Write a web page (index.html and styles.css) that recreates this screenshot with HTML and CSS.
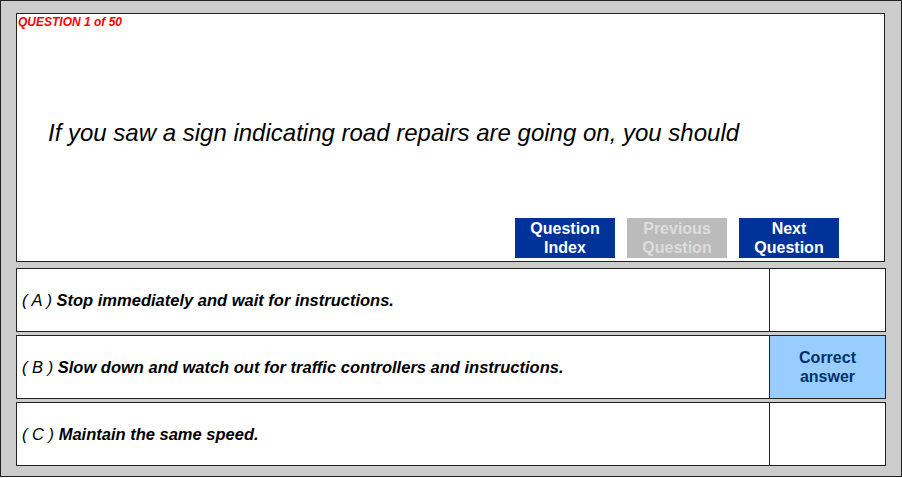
FILE: index.html
```html
<!DOCTYPE html>
<html lang="en">
<head>
  <meta charset="UTF-8" />
  <title>Question 1 of 50</title>
  <link rel="stylesheet" href="styles.css">
</head>
<body>
  <div class="frame">
    <div class="question">
      <div class="counter">QUESTION 1 of 50</div>
      <div class="qtext">If you saw a sign indicating road repairs are going on, you should</div>
      <div class="nav">
        <button class="btn">Question<br>Index</button>
        <button class="btn disabled">Previous<br>Question</button>
        <button class="btn">Next<br>Question</button>
      </div>
    </div>

    <div class="answers">
      <div class="answer">
        <div class="atext"><span class="letter">( A )</span> Stop immediately and wait for instructions.</div>
        <div class="mark"></div>
      </div>
      <div class="answer">
        <div class="atext"><span class="letter">( B )</span> Slow down and watch out for traffic controllers and instructions.</div>
        <div class="mark correct">Correct<br>answer</div>
      </div>
      <div class="answer">
        <div class="atext"><span class="letter">( C )</span> Maintain the same speed.</div>
        <div class="mark"></div>
      </div>
    </div>
  </div>
</body>
</html>
```

FILE: styles.css
```css
body { margin: 0; font-family: "Liberation Sans", Arial, sans-serif; background: #fff; }

.frame {
  background: #cccccc;
  border: 1px solid #222;
  padding: 12px 0 0 15px;
  width: 885px;
  height: 463px;
}

.question {
  width: 867px;
  height: 247px;
  background: #fff;
  border: 1px solid #222;
  display: flex;
  flex-direction: column;
}
.counter {
  color: #ff0000;
  font-size: 12px;
  font-weight: bold;
  font-style: italic;
  padding: 1px 0 0 1px;
  line-height: 14px;
}
.qtext {
  font-size: 24px;
  font-style: italic;
  color: #000;
  padding: 90px 0 0 31px;
  line-height: 28px;
}
.nav {
  margin-top: auto;
  display: flex;
  justify-content: flex-end;
  gap: 12px;
  padding: 0 45px 3px 0;
}
.btn {
  width: 100px;
  height: 40px;
  border: none;
  padding: 0;
  background: #003399;
  color: #fff;
  font-family: "Liberation Sans", Arial, sans-serif;
  font-size: 16px;
  font-weight: bold;
  line-height: 19px;
  cursor: pointer;
}
.btn.disabled { background: #bbbbbb; color: #dddddd; cursor: default; }

.answers {
  margin-top: 6px;
  display: flex;
  flex-direction: column;
  gap: 3px;
  width: 870px;
}
.answer {
  height: 62px;
  background: #fff;
  border: 1px solid #222;
  display: flex;
}
.atext {
  flex: 1;
  display: flex;
  align-items: center;
  padding-left: 5px;
  font-size: 16.5px;
  font-weight: bold;
  font-style: italic;
  color: #000;
  white-space: pre;
}
.letter { font-weight: normal; }
.mark {
  width: 115px;
  border-left: 1px solid #222;
  display: flex;
  align-items: center;
  justify-content: center;
  text-align: center;
  font-size: 16px;
  font-weight: bold;
  line-height: 19px;
  color: #003366;
}
.mark.correct { background: #99ccff; }
```
